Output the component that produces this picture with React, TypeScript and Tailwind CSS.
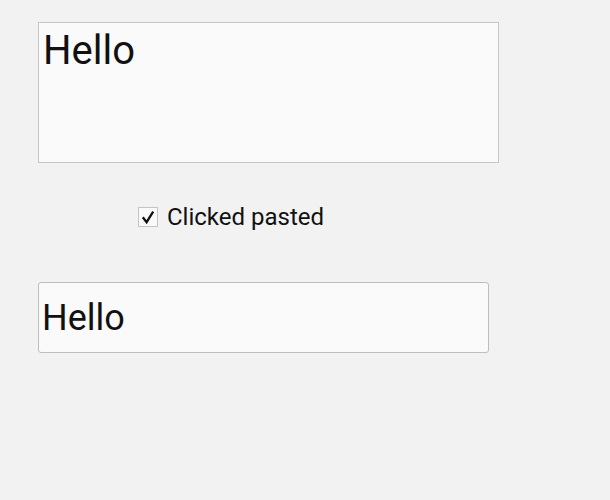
export default function App() {
  return (
    <div className="w-[610px] h-[500px] bg-[#f2f2f2]" style={{ fontFamily: "Roboto, sans-serif" }}>
      <div className="pt-[22px] pl-[38px]">
        <div className="w-[461px] h-[141px] border border-[#c6c6c6] bg-[#fafafa] pl-[4px] pt-[4px] text-[40px] leading-[48px] text-[#111]">
          Hello
        </div>
      </div>
      <div className="mt-[44px] ml-[138px] flex items-center gap-[9px] h-[20px]">
        <div className="w-[20px] h-[20px] border border-[#c4c4c4] bg-[#fafafa] flex items-center justify-center">
          <svg width="16" height="16" viewBox="0 0 16 16">
            <path d="M2.8 8.2 L6.6 13.2 L13.2 2.6" fill="none" stroke="#111" strokeWidth="2.3" />
          </svg>
        </div>
        <span className="text-[24px] leading-[20px] text-[#111]">Clicked pasted</span>
      </div>
      <div className="pl-[38px] mt-[55px]">
        <div className="w-[451px] h-[71px] border border-[#bdbdbd] rounded-[3px] bg-[#fafafa] pl-[3px] flex items-center text-[36px] text-[#111]">
          Hello
        </div>
      </div>
    </div>
  );
}
